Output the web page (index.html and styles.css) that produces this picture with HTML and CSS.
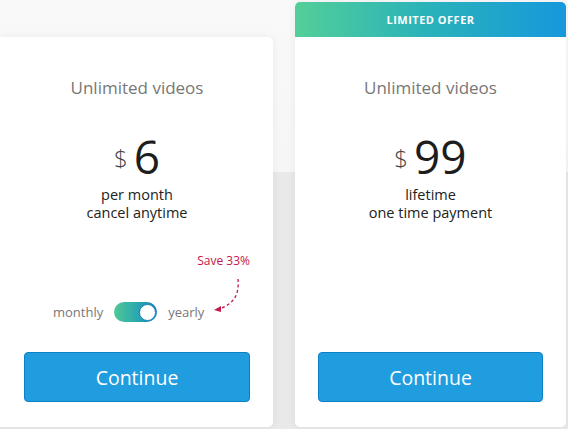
FILE: index.html
```html
<!DOCTYPE html>
<html>
<head>
  <title>Pricing</title>
  <link rel="stylesheet" href="styles.css">
</head>
<body>
  <div class="plans">
    <div class="card first">
      <div class="card-body">
        <div class="title">Unlimited videos</div>
        <div class="price"><span class="cur">$</span><span class="amount">6</span></div>
        <div class="terms">per month<br>cancel anytime</div>
        <div class="billing">
          <div class="save">Save 33%</div>
          <div class="switch-row">
            <span class="opt">monthly</span>
            <span class="switch"><span class="knob"></span></span>
            <span class="opt">yearly</span>
          </div>
          <svg class="arrow" width="34" height="36" viewBox="0 0 34 36">
            <path d="M27 2 C28 14 26 26 8 32" fill="none" stroke="#c4174a" stroke-width="1.3" stroke-dasharray="3 2.5"/>
            <path d="M3 33 L10 29 L10 35 Z" fill="#c4174a"/>
          </svg>
        </div>
        <button class="continue">Continue</button>
      </div>
    </div>

    <div class="card offer">
      <div class="ribbon">LIMITED OFFER</div>
      <div class="card-body">
        <div class="title">Unlimited videos</div>
        <div class="price"><span class="cur">$</span><span class="amount">99</span></div>
        <div class="terms">lifetime<br>one time payment</div>
        <button class="continue">Continue</button>
      </div>
    </div>
  </div>
</body>
</html>
```

FILE: styles.css
```css
body {
  margin: 0;
  height: 429px;
  overflow: hidden;
  font-family: "Open Sans", "DejaVu Sans", sans-serif;
  background: linear-gradient(#f9f9f9, #f6f6f6 172px, #e9e9e9 172px, #e9e9e9);
}
.plans {
  display: flex;
  align-items: flex-end;
  gap: 22px;
  height: 427px;
}
.card {
  width: 271px;
  flex: none;
  display: flex;
  flex-direction: column;
  background: #fff;
  border-radius: 5px;
  box-shadow: 0 0 8px rgba(0,0,0,0.06);
}
.card.first {
  width: 273px;
  border-radius: 0 5px 5px 0;
}
.card-body {
  height: 390px;
  box-sizing: border-box;
  padding: 40px 23px 25px;
  display: flex;
  flex-direction: column;
  align-items: stretch;
  text-align: center;
}
.first .card-body {
  padding-left: 24px;
}
.ribbon {
  height: 35px;
  line-height: 35px;
  border-radius: 5px 5px 0 0;
  background: linear-gradient(90deg, #53cf98, #2cb4b8 45%, #1698dc);
  color: #fff;
  font-size: 11px;
  font-weight: 700;
  letter-spacing: 0.5px;
  text-align: center;
}
.title {
  font-size: 17px;
  line-height: 22px;
  color: #777;
}
.price {
  margin-top: 32px;
  height: 50px;
  display: flex;
  justify-content: center;
  align-items: center;
  gap: 6px;
  color: #1d1d1d;
}
.cur {
  font-size: 24px;
  font-weight: 300;
  color: #444;
  margin-top: 2px;
}
.amount {
  font-size: 46px;
  line-height: 50px;
}
.terms {
  margin-top: 5px;
  font-size: 14.5px;
  line-height: 18px;
  color: #222;
}
.billing {
  position: relative;
  margin-top: 31px;
}
.save {
  text-align: right;
  font-size: 12px;
  line-height: 16px;
  color: #c4174a;
}
.switch-row {
  margin-top: 33px;
  padding-left: 29px;
  display: flex;
  align-items: center;
  gap: 11px;
  height: 20px;
}
.opt {
  font-size: 13px;
  color: #777;
}
.switch {
  width: 43px;
  height: 20px;
  box-sizing: border-box;
  border-radius: 10px;
  background: linear-gradient(90deg, #4fc896, #2aa7b0 55%, #1583b8);
  display: flex;
  justify-content: flex-end;
  align-items: center;
  padding-right: 1px;
}
.knob {
  width: 17px;
  height: 17px;
  box-sizing: border-box;
  border-radius: 50%;
  background: #fff;
  border: 1px solid #1582b6;
}
.arrow {
  position: absolute;
  left: 187px;
  top: 24px;
}
.continue {
  margin-top: auto;
  height: 50px;
  border: 1px solid #0c80c4;
  border-radius: 4px;
  background: #1f9ddf;
  color: #fff;
  font-family: inherit;
  font-size: 19.5px;
  cursor: pointer;
}
```
